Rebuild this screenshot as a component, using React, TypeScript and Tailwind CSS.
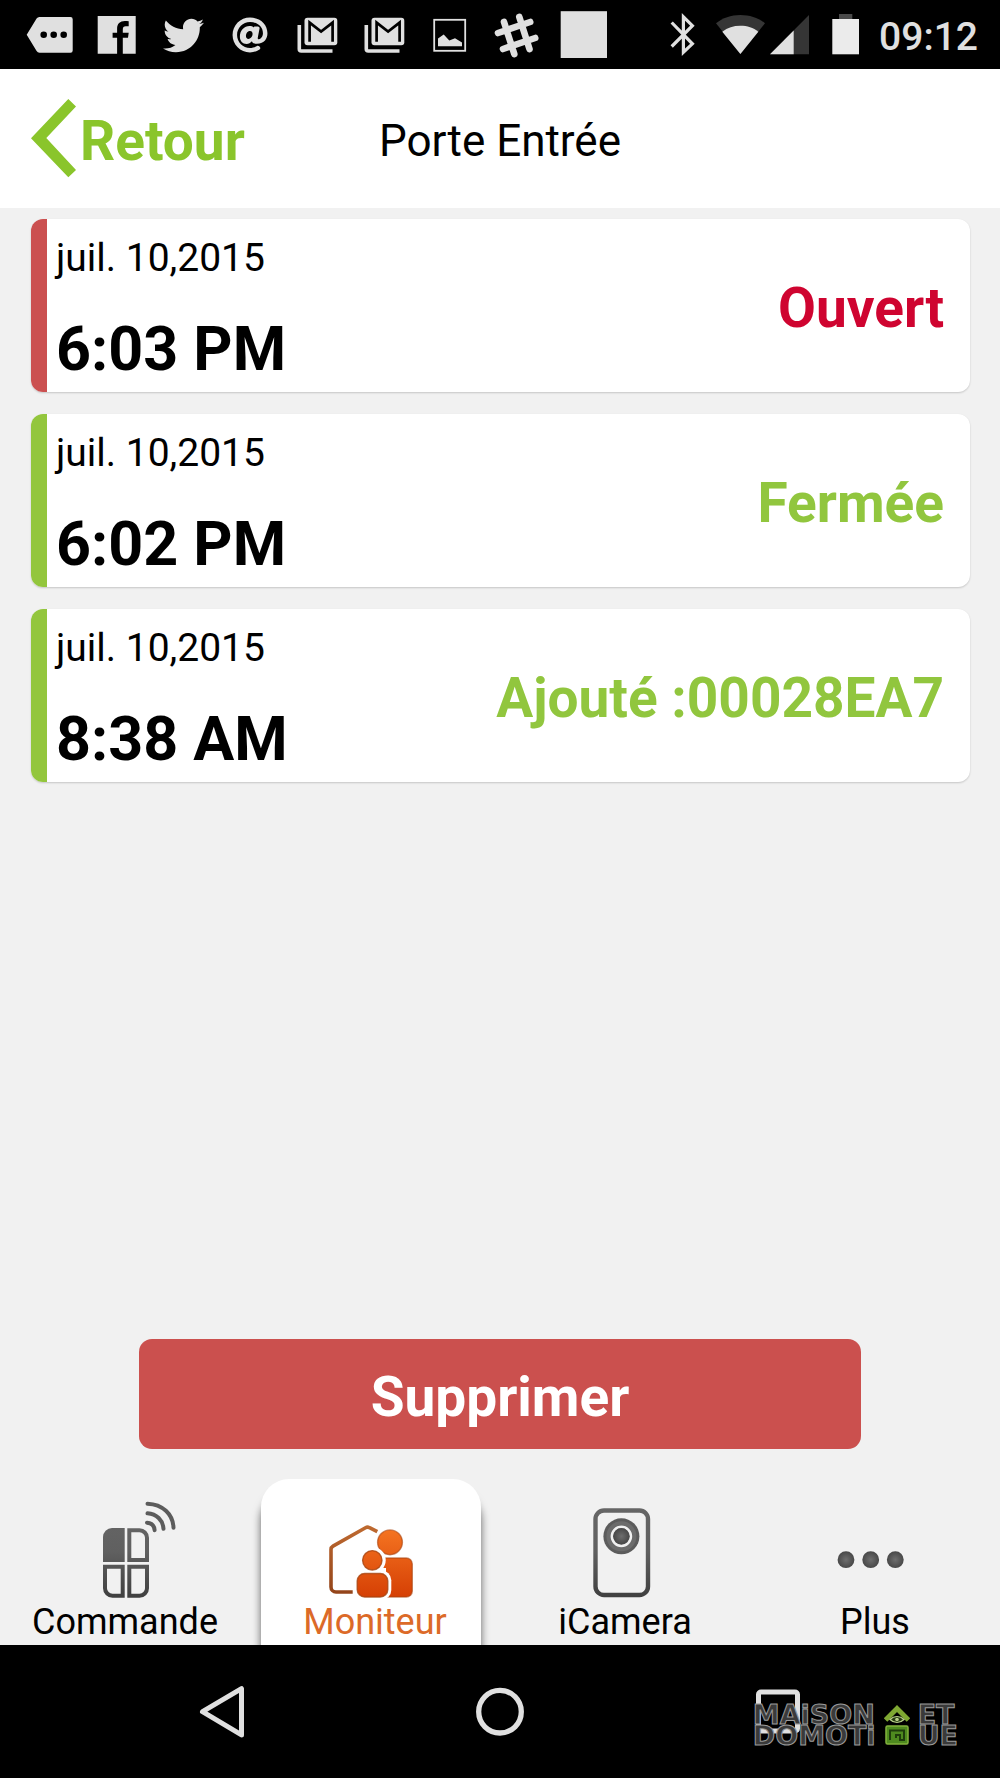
import type { ReactNode } from "react";
import clsx from "clsx";
import { FaAt, FaTwitter } from "react-icons/fa";

type DoorEvent = {
  date: string;
  time: string;
  label: string;
  kind: "open" | "closed" | "added";
};

const EVENTS: DoorEvent[] = [
  { date: "juil. 10,2015", time: "6:03 PM", label: "Ouvert", kind: "open" },
  { date: "juil. 10,2015", time: "6:02 PM", label: "Fermée", kind: "closed" },
  { date: "juil. 10,2015", time: "8:38 AM", label: "Ajouté :00028EA7", kind: "added" },
];

function StatusGlyph({ children, width = 60 }: { children: ReactNode; width?: number }) {
  return (
    <svg width={width} height={60} viewBox={`0 0 ${width} 60`} fill="#e0e0e0" aria-hidden="true">
      {children}
    </svg>
  );
}

function GmailGlyph() {
  return (
    <StatusGlyph>
      <path d="M12.3 20v24a2 2 0 0 0 2 2h31.2" fill="none" stroke="#e0e0e0" strokeWidth="3.6" />
      <rect x="17.5" y="12.7" width="32.8" height="27.6" rx="3" />
      <path d="M22.6 36.7V17.6l11.5 9 11.5-9v19.1" fill="none" stroke="#000" strokeWidth="2.7" />
    </StatusGlyph>
  );
}

function StatusBar() {
  return (
    <div className="flex h-[69px] items-center justify-between bg-black pt-px pr-[22px] pl-[17px] text-[#e0e0e0]">
      <div className="grid w-[600px] shrink-0 grid-cols-9 items-center justify-items-center">
        <StatusGlyph>
          <path d="M6.7 29.7 16.6 13.6a3.4 3.4 0 0 1 2.9-1.6h31a2.2 2.2 0 0 1 2.2 2.2v31.3a2.2 2.2 0 0 1-2.2 2.2h-31a3.4 3.4 0 0 1-2.9-1.6z" />
          <g fill="#000">
            <circle cx="23.7" cy="29.7" r="3.3" />
            <circle cx="33.7" cy="29.7" r="3.3" />
            <circle cx="43.7" cy="29.7" r="3.3" />
          </g>
        </StatusGlyph>
        <StatusGlyph>
          <path d="M10.7 11h38v37.7H35.8V32.7h5.2l.7-4.9h-5.9v-3.3c0-2.2.9-3.3 3-3.3h2.9v-5c-1-.2-2.4-.3-3.9-.3-4.8 0-7.7 2.7-7.7 7.9v4h-4.5v4.9h4.5v16H10.7z" />
        </StatusGlyph>
        <FaTwitter size={41} color="#e0e0e0" />
        <FaAt size={36} color="#e0e0e0" />
        <GmailGlyph />
        <GmailGlyph />
        <StatusGlyph>
          <rect x="14.2" y="14.8" width="31" height="31" fill="none" stroke="#e0e0e0" strokeWidth="1.8" />
          <path d="M18 41.2v-7.8l5.7-4 5.6 6 5.7-2.2 7 4.2v3.8z" />
        </StatusGlyph>
        <StatusGlyph>
          <path
            d="M17 17l10.3 32M32.3 12l10.2 32M11 28l32.2-11M16 44l32.2-11"
            fill="none"
            stroke="#e0e0e0"
            strokeWidth="6.6"
            strokeLinecap="round"
          />
        </StatusGlyph>
        <StatusGlyph>
          <rect x="6.7" y="6.2" width="46.3" height="46.8" />
        </StatusGlyph>
      </div>
      <div className="flex items-center gap-5">
        <StatusGlyph width={26}>
          <path
            d="M2.7 17.5 23.4 38.8 14.4 47.2V11.8l9 8.9L2.7 41.5"
            fill="none"
            stroke="#e0e0e0"
            strokeWidth="3.2"
          />
        </StatusGlyph>
        <div className="flex items-center gap-[3px]">
          <StatusGlyph width={51}>
            <path d="M25.4 49 1 18.3C7.5 13 16 10 25.4 10S43.5 13 50 18.3z" fill="#353535" />
            <path d="M25.4 49 7.3 26.7C12.5 22.5 18.5 20.7 25.4 20.7S38.3 22.5 43.3 26.7z" />
          </StatusGlyph>
          <StatusGlyph width={41}>
            <path d="M1 49.3 40 10v39.3z" fill="#353535" />
            <path d="M1 49.3 24.7 25.6v23.7z" />
          </StatusGlyph>
        </div>
        <StatusGlyph width={29}>
          <rect x="9" y="9" width="13.3" height="5" fill="#4a4a4a" />
          <rect x="2.3" y="14" width="26.7" height="35.3" fill="#ebebeb" />
        </StatusGlyph>
        <time className="pt-1 text-[39px] leading-[46px] font-medium">09:12</time>
      </div>
    </div>
  );
}

function Header() {
  return (
    <header className="grid h-[139px] grid-cols-[1fr_auto_1fr] items-center bg-white px-[31px]">
      <button type="button" className="flex items-center gap-1 text-[55px] leading-[64px] font-bold text-[#8ac52b]">
        <svg width="45" height="80" viewBox="0 0 45 80" fill="currentColor" aria-hidden="true">
          <path d="M37.3 0 45 7.4 15.3 39 45 71 37.3 78.3 0 39.2z" />
        </svg>
        <span className="pt-1">Retour</span>
      </button>
      <h1 className="pt-1 text-[44px] leading-[52px] text-black">Porte Entrée</h1>
    </header>
  );
}

function EventCard({ event }: { event: DoorEvent }) {
  return (
    <li className="flex h-[173px] overflow-hidden rounded-xl bg-white shadow-[0_1px_2px_rgba(0,0,0,0.18)]">
      <span className={clsx("w-4 shrink-0", event.kind === "open" ? "bg-[#cb5050]" : "bg-[#93c63d]")} />
      <div className="flex flex-1 items-center justify-between pr-[26px] pl-[9px]">
        <div className="flex flex-col gap-8 self-start pt-4">
          <span className="text-[39px] leading-[46px]">{event.date}</span>
          <span className="text-[61px] leading-[72px] font-bold">{event.time}</span>
        </div>
        <span
          className={clsx(
            "pt-1 text-[55px] leading-[64px] font-bold",
            event.kind === "open" ? "text-[#cf0430]" : "text-[#91c63e]",
          )}
        >
          {event.label}
        </span>
      </div>
    </li>
  );
}

function TabIcon({ children }: { children: ReactNode }) {
  return (
    <svg width="120" height="110" viewBox="0 0 120 110" fill="none" aria-hidden="true">
      <defs>
        <linearGradient id="tab-gray" gradientUnits="userSpaceOnUse" x1="0" y1="15" x2="0" y2="108">
          <stop offset="0" stopColor="#666" />
          <stop offset="0.5" stopColor="#606060" />
          <stop offset="1" stopColor="#3f3f3f" />
        </linearGradient>
        <radialGradient id="tab-dot">
          <stop offset="0" stopColor="#6e6e6e" />
          <stop offset="1" stopColor="#484848" />
        </radialGradient>
        <linearGradient id="tab-orange" gradientUnits="userSpaceOnUse" x1="0" y1="38" x2="0" y2="108">
          <stop offset="0" stopColor="#f57522" />
          <stop offset="1" stopColor="#d53f04" />
        </linearGradient>
        <linearGradient id="tab-house" gradientUnits="userSpaceOnUse" x1="0" y1="35" x2="0" y2="104">
          <stop offset="0" stopColor="#bf6a30" />
          <stop offset="1" stopColor="#93441a" />
        </linearGradient>
      </defs>
      {children}
    </svg>
  );
}

function RemoteIcon() {
  return (
    <TabIcon>
      <path d="M42 72V47a9 9 0 0 1 9-9h12.7v34z" fill="url(#tab-gray)" />
      <g stroke="url(#tab-gray)" strokeWidth="4">
        <path d="M68.3 40.3h10.2a7.5 7.5 0 0 1 7.5 7.5V70H68.3z" />
        <path d="M44 76.7h17.7v29H51.5a7.5 7.5 0 0 1-7.5-7.5z" />
        <path d="M68.3 76.7H86v21.5a7.5 7.5 0 0 1-7.5 7.5H68.3z" />
      </g>
      <g stroke="#5c5c5c" strokeWidth="4" strokeLinecap="round">
        <path d="M86.5 13.7c15 .5 25.5 10.5 26 24" />
        <path d="M86.5 23.3c9 .5 15.5 7 16 15.5" />
        <path d="M86 32.7c4.5.3 7.3 3.2 7.6 7.5" />
      </g>
    </TabIcon>
  );
}

function FamilyIcon() {
  return (
    <TabIcon>
      <path
        d="M41.7 102H25a5 5 0 0 1-5-5V59.5a4 4 0 0 1 2-3.4L54.5 37.7a4 4 0 0 1 4 0l7.8 4"
        stroke="url(#tab-house)"
        strokeWidth="3.6"
      />
      <g fill="url(#tab-orange)" stroke="#a8430f" strokeOpacity="0.6" strokeWidth="1.4">
        <circle cx="79" cy="52.3" r="12.4" />
        <rect x="68" y="68" width="33.3" height="39" rx="6" />
      </g>
      <g fill="#fff">
        <circle cx="61.3" cy="70.3" r="13.4" />
        <rect x="42.7" y="80.3" width="37.6" height="29.7" rx="10" />
        <path d="M60 78h15v8H60z" />
      </g>
      <g fill="url(#tab-orange)" stroke="#a8430f" strokeOpacity="0.8" strokeWidth="1.4">
        <circle cx="61.3" cy="70.3" r="9.7" />
        <rect x="46.2" y="83.5" width="30.6" height="23.5" rx="7.5" />
      </g>
    </TabIcon>
  );
}

function CameraIcon() {
  return (
    <TabIcon>
      <rect x="34.5" y="20.5" width="52.5" height="84.5" rx="8.5" stroke="url(#tab-gray)" strokeWidth="4.4" />
      <circle cx="60.4" cy="46.3" r="18" fill="#5c5c5c" />
      <circle cx="60.4" cy="46.3" r="13" stroke="#6c6c6c" strokeWidth="4" />
      <circle cx="60.4" cy="46.3" r="9.6" stroke="#f1f1f1" strokeWidth="2.5" />
      <circle cx="60.4" cy="46.3" r="8" fill="url(#tab-dot)" />
    </TabIcon>
  );
}

function MoreIcon() {
  return (
    <TabIcon>
      <circle cx="35" cy="69.7" r="8.4" fill="url(#tab-dot)" />
      <circle cx="59.7" cy="69.7" r="8.4" fill="url(#tab-dot)" />
      <circle cx="84.3" cy="69.7" r="8.4" fill="url(#tab-dot)" />
    </TabIcon>
  );
}

const TABS = [
  { label: "Commande", icon: <RemoteIcon /> },
  { label: "Moniteur", icon: <FamilyIcon />, active: true },
  { label: "iCamera", icon: <CameraIcon /> },
  { label: "Plus", icon: <MoreIcon /> },
];

function TabBar() {
  return (
    <nav className="grid grid-cols-4 overflow-hidden pt-[30px]">
      {TABS.map((tab) => (
        <a
          key={tab.label}
          href="#"
          aria-current={tab.active ? "page" : undefined}
          className={clsx(
            "relative flex flex-col items-center pt-[11px] pb-px",
            tab.active ? "text-[#dc6a28]" : "text-black",
          )}
        >
          {tab.active && (
            <span className="absolute inset-y-0 right-[19px] left-[11px] rounded-t-[28px] bg-white shadow-[0_14px_8px_rgba(0,0,0,0.6)]" />
          )}
          <span className="relative pr-2">{tab.icon}</span>
          <span className="relative text-[36px] leading-[44px]">{tab.label}</span>
        </a>
      ))}
    </nav>
  );
}

function Watermark() {
  return (
    <div
      className="absolute right-[42px] bottom-[32px] flex items-center text-[27px] leading-[21px] font-bold text-[#3a3a3a] [-webkit-text-stroke:1px_#9a9a9a]"
      style={{ fontFamily: '"DejaVu Sans", sans-serif' }}
    >
      <p>
        MAiSON
        <br />
        DOMOTi
      </p>
      <svg className="mx-2" width="26" height="42" viewBox="0 0 26 42" aria-hidden="true">
        <path d="M1.5 16 13 4.5 24.5 16" fill="none" stroke="#7fa832" strokeWidth="5" />
        <path d="M6 15.5c4-4 10-4 14 0-4 4-10 4-14 0z" fill="#263b10" stroke="#b9cf8a" strokeWidth="1.2" />
        <circle cx="13" cy="15.5" r="1.8" fill="#b9cf8a" />
        <rect x="2" y="22" width="22" height="18" rx="1.5" fill="#4e8a1f" stroke="#82b23c" strokeWidth="1.5" />
        <path d="M6 36V26.5h14V36h-4v-5h-4v3" fill="none" stroke="#1f3d0c" strokeWidth="2" />
      </svg>
      <p>
        ET
        <br />
        UE
      </p>
    </div>
  );
}

function SystemNav() {
  return (
    <div className="relative grid h-[133px] grid-cols-3 items-center justify-items-center bg-black px-[83px]">
      <button type="button" aria-label="Back">
        <svg width="60" height="60" viewBox="0 0 60 60" fill="none" stroke="#e0e0e0" strokeWidth="5">
          <path d="M10.5 29.7 49.5 6.7v46.2z" strokeLinejoin="round" />
        </svg>
      </button>
      <button type="button" aria-label="Home">
        <svg width="60" height="60" viewBox="0 0 60 60" fill="none" stroke="#e0e0e0" strokeWidth="5.3">
          <circle cx="30" cy="29.7" r="21.3" />
        </svg>
      </button>
      <button type="button" aria-label="Recents">
        <svg width="60" height="60" viewBox="0 0 60 60" fill="none" stroke="#e0e0e0" strokeWidth="5">
          <rect x="10.5" y="10" width="39" height="39" rx="2.5" />
        </svg>
      </button>
      <Watermark />
    </div>
  );
}

export default function App() {
  return (
    <div
      lang="fr"
      className="flex min-h-screen flex-col bg-[#f1f1f1] text-black"
      style={{ fontFamily: "Roboto, sans-serif" }}
    >
      <StatusBar />
      <Header />
      <main className="flex flex-1 flex-col justify-between pt-[11px]">
        <ul className="flex flex-col gap-[22px] pr-[30px] pl-[31px]">
          {EVENTS.map((event) => (
            <EventCard key={event.time} event={event} />
          ))}
        </ul>
        <div className="px-[139px]">
          <button
            type="button"
            className="h-[110px] w-full rounded-[13px] bg-[#cb504e] pt-1.5 text-[55px] leading-[64px] font-bold text-white"
          >
            Supprimer
          </button>
        </div>
      </main>
      <TabBar />
      <SystemNav />
    </div>
  );
}
